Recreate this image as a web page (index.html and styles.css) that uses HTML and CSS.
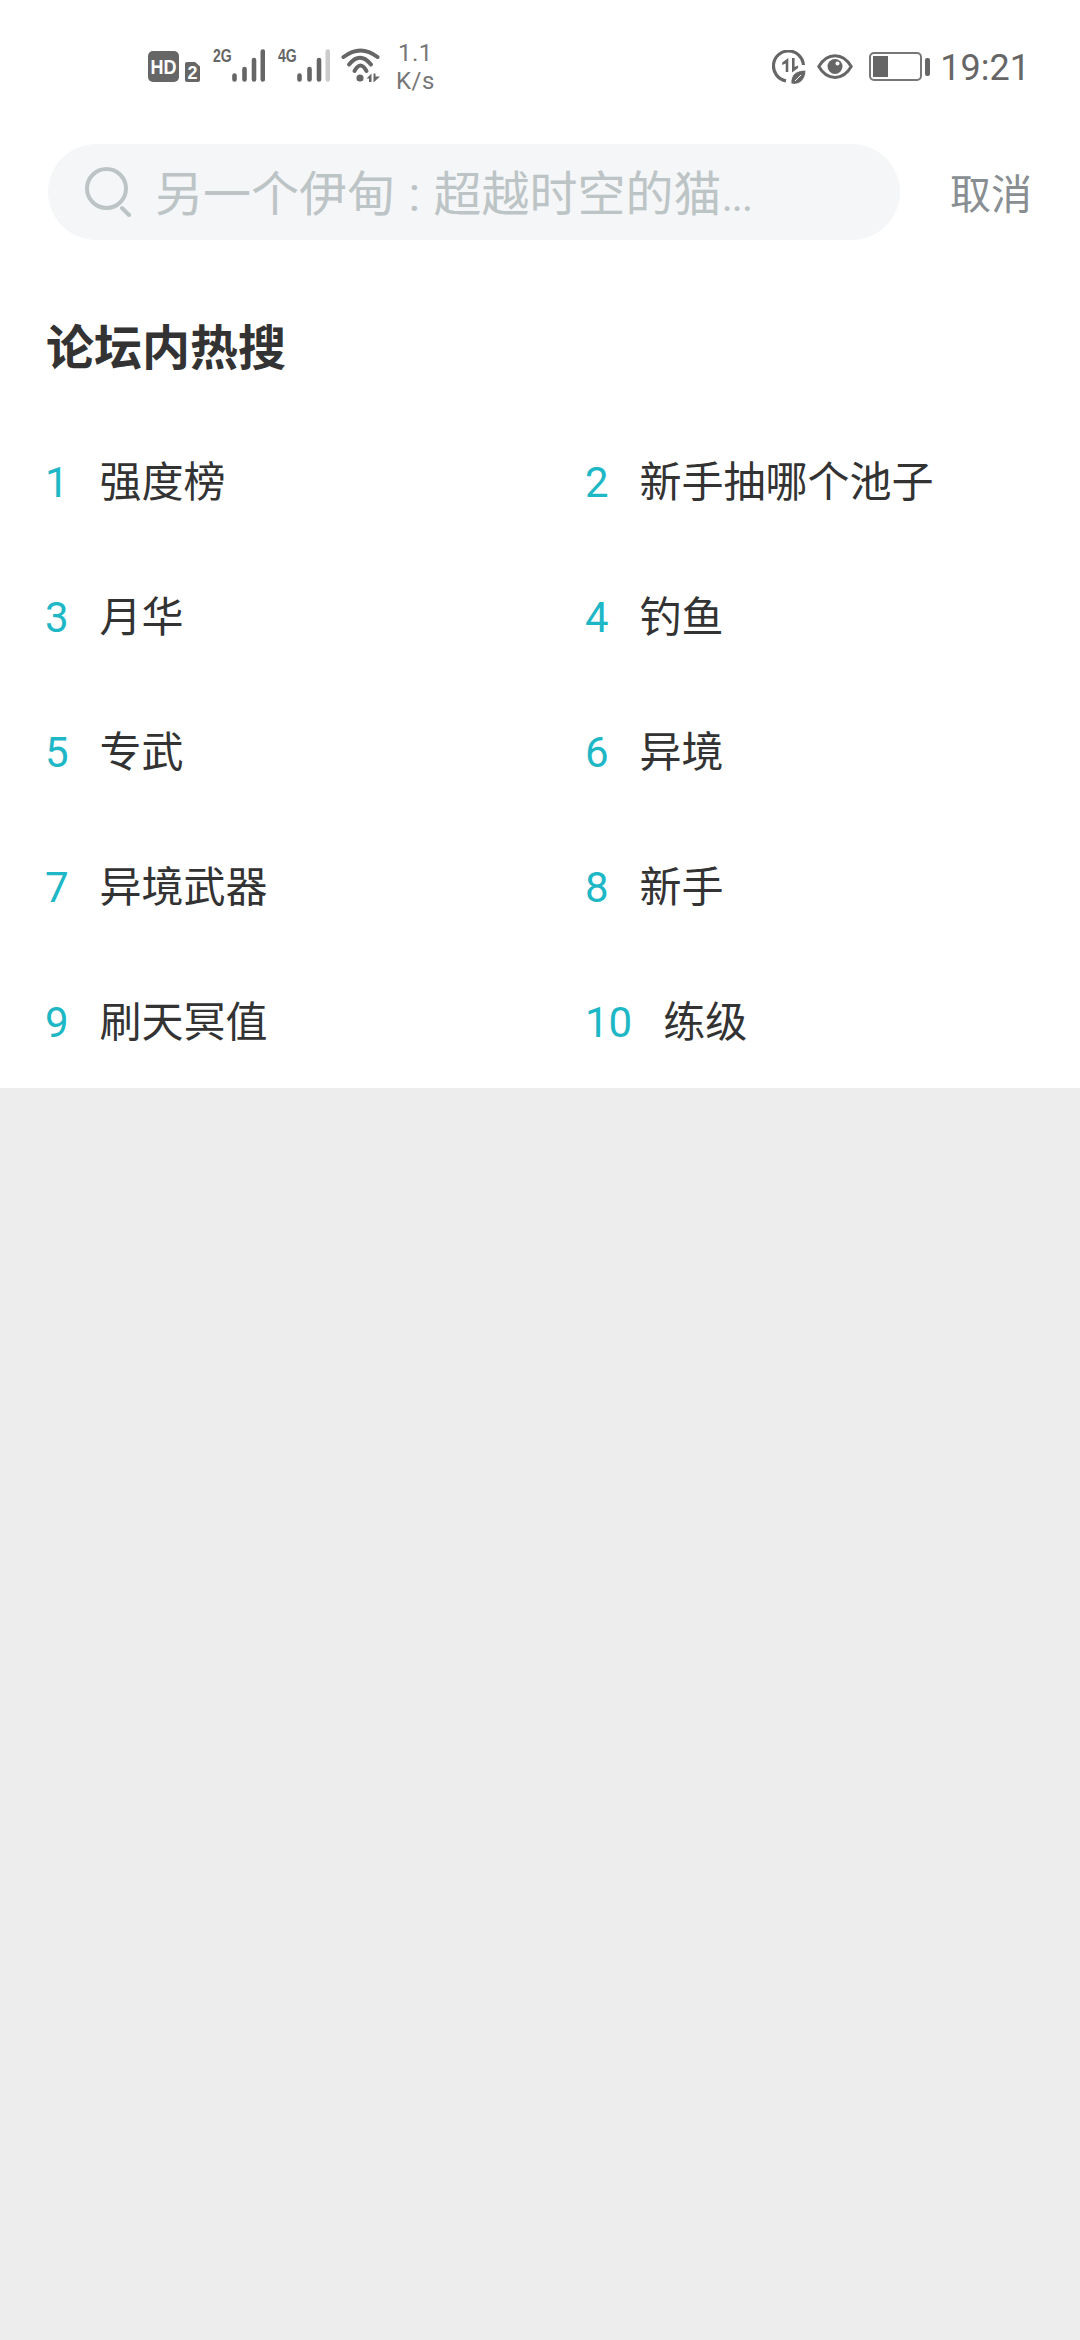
FILE: index.html
```html
<!DOCTYPE html>
<html lang="zh">
<head>
<meta charset="utf-8">
<title>论坛内热搜</title>
<link rel="stylesheet" href="styles.css">
</head>
<body>
<div class="panel">
  <div class="status">
    <div class="status-left">
      <svg class="ic-hd" width="54" height="32" viewBox="0 0 54 32">
        <rect x="0" y="1" width="31" height="31" rx="5" fill="#666"/>
        <text x="15.500" y="24" class="hd-text" text-anchor="middle" textLength="26" lengthAdjust="spacingAndGlyphs">HD</text>
        <path d="M39 12h8l5 4.500V30a2 2 0 0 1-2 2H39a2 2 0 0 1-2-2V14a2 2 0 0 1 2-2z" fill="#666"/>
        <text x="44.500" y="29" class="hd-two" text-anchor="middle">2</text>
      </svg>
      <div class="sig">
        <span class="sig-label">2G</span>
        <svg class="bars" width="33" height="33" viewBox="0 0 33 33"><g stroke="#666" stroke-width="4.600" stroke-linecap="round"><path d="M2.500 30.500v-4M12.500 30.500V20M22 30.500V11M30.800 30.500V2.500"/></g></svg>
      </div>
      <div class="sig">
        <span class="sig-label">4G</span>
        <svg class="bars" width="33" height="33" viewBox="0 0 33 33"><g stroke="#666" stroke-width="4.600" stroke-linecap="round"><path d="M2.500 30.500v-4M12.500 30.500V20M22 30.500V11"/></g><path d="M30.800 30.500V2.500" stroke="#ccc" stroke-width="4.600" stroke-linecap="round"/></svg>
      </div>
      <svg class="ic-wifi" width="40" height="36" viewBox="0 0 40 36">
        <g fill="none" stroke="#666" stroke-width="4" stroke-linecap="round"><path d="M2.500 9Q19.500-4 36.500 9"/><path d="M8 16.500Q19 3 30 16.500"/><path d="M13.500 23Q19.500 12 25.500 23"/></g>
        <circle cx="19" cy="30" r="3.600" fill="#666"/>
        <path d="M30.500 25.500v8.500H28v-3.500h-2.500zM32.500 25.500h2v3h4.500l-6.500 6z" fill="#666"/>
      </svg>
      <div class="speed"><span>1.1</span><span>K/s</span></div>
    </div>
    <div class="status-right">
      <svg class="ic-data" width="34" height="34" viewBox="0 0 34 34">
        <path d="M14 30.800A15 15 0 1 1 31.400 15" fill="none" stroke="#666" stroke-width="3.200"/>
        <path d="M16.300 8v14h-2.600v-8.500l-3.500 1.500v-2.500z" fill="#666"/>
        <path d="M20 8h2.600v9l3.500-1.500v2.500L20 22.500z" fill="#666"/>
        <path d="M19 34c-1-9 5-14 15-14 0 9-6 16-15 14z" fill="#666" stroke="#fff" stroke-width="1"/>
        <path d="M23 31l6-6" stroke="#fff" stroke-width="1"/>
      </svg>
      <svg class="ic-eye" width="36" height="27" viewBox="0 0 36 27">
        <path d="M1.800 13.500C10-1 26-1 34.200 13.500 26 28 10 28 1.800 13.500z" fill="none" stroke="#666" stroke-width="3"/>
        <circle cx="18" cy="13.500" r="7.500" fill="#666"/>
        <circle cx="20.500" cy="10.500" r="2" fill="#fff"/>
      </svg>
      <div class="battery"><div class="batt-body"><div class="batt-fill"></div></div><div class="batt-cap"></div></div>
      <span class="clock">19:21</span>
    </div>
  </div>

  <div class="search-row">
    <div class="search">
      <svg class="ic-search" width="48" height="50" viewBox="0 0 48 50">
        <circle cx="21.500" cy="21.500" r="19.500" fill="none" stroke="#bcc4c6" stroke-width="4"/>
        <path d="M37 41l7 7" stroke="#bcc4c6" stroke-width="4" stroke-linecap="round"/>
      </svg>
      <span class="placeholder">另一个伊甸 : 超越时空的猫<span class="dots">...</span></span>
    </div>
    <span class="cancel">取消</span>
  </div>

  <h2 class="title">论坛内热搜</h2>

  <div class="grid">
    <div class="item"><span class="num">1</span><span class="txt">强度榜</span></div>
    <div class="item"><span class="num">2</span><span class="txt">新手抽哪个池子</span></div>
    <div class="item"><span class="num">3</span><span class="txt">月华</span></div>
    <div class="item"><span class="num">4</span><span class="txt">钓鱼</span></div>
    <div class="item"><span class="num">5</span><span class="txt">专武</span></div>
    <div class="item"><span class="num">6</span><span class="txt">异境</span></div>
    <div class="item"><span class="num">7</span><span class="txt">异境武器</span></div>
    <div class="item"><span class="num">8</span><span class="txt">新手</span></div>
    <div class="item"><span class="num">9</span><span class="txt">刷天冥值</span></div>
    <div class="item"><span class="num">10</span><span class="txt">练级</span></div>
  </div>
</div>
</body>
</html>
```
FILE: styles.css
```css
* { box-sizing: border-box; }
html, body { margin: 0; padding: 0; }
body {
  width: 1080px;
  height: 2340px;
  background: #ededed;
  font-family: Roboto, "Noto Sans CJK SC", sans-serif;
  overflow: hidden;
}
.panel { background: #fff; height: 1088px; }

.status {
  height: 144px;
  padding: 49px 50px 0 148px;
  display: flex;
  justify-content: space-between;
  align-items: flex-start;
}
.status-left, .status-right { display: flex; align-items: flex-start; }
.ic-hd { margin-top: 1px; }
.hd-text { font: bold 21px "Liberation Sans", sans-serif; fill: #fff; }
.hd-two { font: bold 18px "Liberation Sans", sans-serif; fill: #fff; }
.sig { display: flex; margin-left: 11px; width: 52px; }
.sig + .sig { margin-left: 13px; }
.sig-label {
  width: 19px;
  font: bold 19px/14px "Liberation Sans", sans-serif;
  color: #666;
  transform: scaleX(.74);
  transform-origin: left center;
  white-space: nowrap;
}
.bars { flex: none; }
.ic-wifi { margin-left: 11px; margin-top: -1px; }
.speed {
  margin-left: 15px;
  margin-top: -10px;
  display: flex;
  flex-direction: column;
  align-items: center;
  font-size: 24px;
  line-height: 28px;
  letter-spacing: .5px;
  color: #777;
}
.ic-data { margin-top: 1px; }
.ic-eye { margin-left: 11px; margin-top: 4px; }
.battery { display: flex; align-items: center; margin-left: 16px; margin-top: 3px; }
.batt-body {
  width: 53px;
  height: 29px;
  border: 2px solid #777;
  border-radius: 5px;
  padding: 2px;
}
.batt-fill { width: 15px; height: 100%; background: #666; }
.batt-cap { width: 5px; height: 18px; margin-left: 3px; background: #666; border-radius: 2px; }
.clock {
  margin-left: 10px;
  margin-top: -5px;
  font-size: 36px;
  line-height: 48px;
  color: #666;
}

.search-row { display: flex; align-items: center; padding-left: 48px; }
.search {
  width: 852px;
  height: 96px;
  background: #f5f6f8;
  border-radius: 48px;
  display: flex;
  align-items: center;
  padding-left: 37px;
}
.ic-search { flex: none; }
.placeholder { margin: 0 0 4px 22px; font-size: 48px; word-spacing: 1.5px; color: #bcc4c6; white-space: nowrap; }
.dots { letter-spacing: -1.500px; font-size: 44px; }
.cancel { margin: 0 0 2px 50px; font-size: 41px; color: #888e92; }

.title {
  margin: 79px 0 0;
  padding-left: 46px;
  height: 60px;
  font-size: 48px;
  line-height: 60px;
  font-weight: 700;
  color: #333;
}

.grid {
  display: grid;
  grid-template-columns: 540px 540px;
  grid-auto-rows: 135px;
  margin-top: 36px;
  padding-left: 45px;
}
.item { display: flex; align-items: baseline; gap: 31px; line-height: 135px; white-space: nowrap; }
.num { font-size: 42px; color: #1eb7c6; }
.txt { font-size: 42px; color: #333; }
```
